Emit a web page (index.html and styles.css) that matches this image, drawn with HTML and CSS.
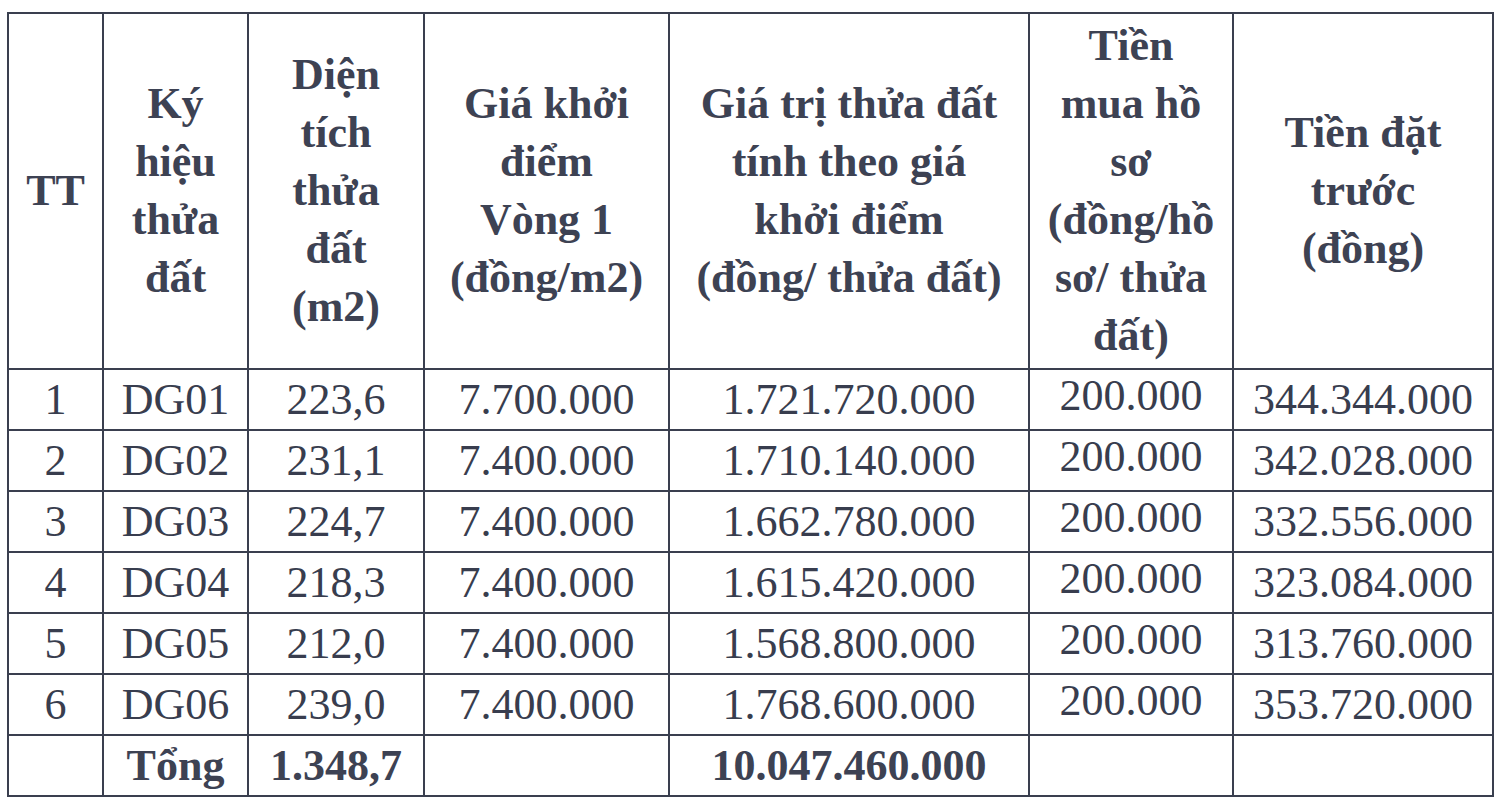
FILE: index.html
```html
<!DOCTYPE html>
<html lang="vi">
<head>
<meta charset="utf-8">
<title>Bảng giá khởi điểm</title>
<link rel="stylesheet" href="styles.css">
</head>
<body>
<div class="sheet">
<table class="price-table">
  <colgroup>
    <col class="c-tt"><col class="c-ky"><col class="c-dt"><col class="c-gia"><col class="c-gt"><col class="c-hs"><col class="c-dat">
  </colgroup>
  <thead>
    <tr>
      <th>TT</th>
      <th>Ký<br>hiệu<br>thửa<br>đất</th>
      <th>Diện<br>tích<br>thửa<br>đất<br>(m2)</th>
      <th>Giá khởi<br>điểm<br>Vòng 1<br>(đồng/m2)</th>
      <th>Giá trị thửa đất<br>tính theo giá<br>khởi điểm<br>(đồng/ thửa đất)</th>
      <th>Tiền<br>mua hồ<br>sơ<br>(đồng/hồ<br>sơ/ thửa<br>đất)</th>
      <th>Tiền đặt<br>trước<br>(đồng)</th>
    </tr>
  </thead>
  <tbody>
    <tr><td>1</td><td>DG01</td><td>223,6</td><td>7.700.000</td><td>1.721.720.000</td><td class="fee"><span>200.000</span></td><td>344.344.000</td></tr>
    <tr><td>2</td><td>DG02</td><td>231,1</td><td>7.400.000</td><td>1.710.140.000</td><td class="fee"><span>200.000</span></td><td>342.028.000</td></tr>
    <tr><td>3</td><td>DG03</td><td>224,7</td><td>7.400.000</td><td>1.662.780.000</td><td class="fee"><span>200.000</span></td><td>332.556.000</td></tr>
    <tr><td>4</td><td>DG04</td><td>218,3</td><td>7.400.000</td><td>1.615.420.000</td><td class="fee"><span>200.000</span></td><td>323.084.000</td></tr>
    <tr><td>5</td><td>DG05</td><td>212,0</td><td>7.400.000</td><td>1.568.800.000</td><td class="fee"><span>200.000</span></td><td>313.760.000</td></tr>
    <tr><td>6</td><td>DG06</td><td>239,0</td><td>7.400.000</td><td>1.768.600.000</td><td class="fee"><span>200.000</span></td><td>353.720.000</td></tr>
    <tr class="total"><td></td><td>Tổng</td><td>1.348,7</td><td></td><td>10.047.460.000</td><td></td><td></td></tr>
  </tbody>
</table>
</div>
</body>
</html>
```
FILE: styles.css
```css
html, body {
  margin: 0;
  padding: 0;
  background: #ffffff;
}
.sheet {
  padding: 12px 8px 0 7px;
}
.price-table {
  border-collapse: collapse;
  table-layout: fixed;
  width: 1485px;
  font-family: "Liberation Serif", "Times New Roman", serif;
  color: #383d4e;
}
.c-tt { width: 95px; }
.c-ky { width: 145px; }
.c-dt { width: 176px; }
.c-gia { width: 245px; }
.c-gt { width: 360px; }
.c-hs { width: 204px; }
.c-dat { width: 260px; }

.price-table th,
.price-table td {
  border: 2px solid #3a3f4f;
  text-align: center;
  vertical-align: middle;
  padding: 0;
}
.price-table th {
  font-weight: bold;
  font-size: 44px;
  line-height: 58px;
  height: 354px;
  color: #3d4253;
}
.price-table td {
  font-size: 44px;
  line-height: 1;
  height: 59px;
  font-weight: normal;
}
.price-table td.fee span {
  display: inline-block;
  transform: translateY(-4px);
}
.price-table tr.total td {
  font-weight: bold;
  color: #3d4253;
}
```
